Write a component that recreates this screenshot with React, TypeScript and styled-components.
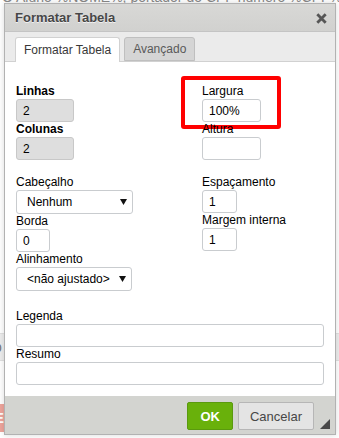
import React from 'react';
import styled, { createGlobalStyle } from 'styled-components';

const GlobalStyle = createGlobalStyle`
  html, body {
    margin: 0;
    padding: 0;
    width: 339px;
    height: 438px;
    overflow: hidden;
    background: #fff;
    font-family: "Liberation Sans", Arial, sans-serif;
  }
`;

// page behind the dialog
const Page = styled.div`
  position: relative;
  width: 339px;
  height: 438px;
  overflow: hidden;
  display: flex;
  flex-direction: column;
`;

const PageText = styled.p`
  margin: -10px 0 0 2px;
  font-size: 14px;
  line-height: 14px;
  color: #8a8a8a;
  white-space: nowrap;
`;

const PageBand = styled.div`
  margin-top: 329px;
  height: 26px;
  background: #ededed;
  border-top: 1px solid #e0e0e0;
  border-bottom: 1px solid #e0e0e0;
  font-size: 14px;
  line-height: 26px;
  color: #777;
  text-indent: -6px;
`;

const PageBottom = styled.div`
  margin-top: 41px;
  display: flex;
  align-items: flex-end;
  gap: 10px;
  height: 30px;
`;

const PinkButton = styled.div`
  width: 52px;
  height: 28px;
  background: #eea59c;
  color: #fff;
  font-size: 15px;
  font-weight: bold;
  line-height: 28px;
  text-indent: -6px;
`;

const GreyBar = styled.div`
  width: 83px;
  height: 3px;
  background: #a3a3a3;
`;

// dialog
const Dialog = styled.div`
  position: absolute;
  left: 4px;
  top: 3px;
  width: 332px;
  height: 432px;
  box-sizing: border-box;
  border: 1px solid #b2b2b2;
  box-shadow: 0 0 6px rgba(0, 0, 0, 0.15);
  display: flex;
  flex-direction: column;
  background: #fff;
`;

const TitleBar = styled.div`
  height: 27px;
  background: linear-gradient(#d8d8d6, #d1d1cf);
  border-bottom: 1px solid #c4c4c4;
  display: flex;
  align-items: center;
  justify-content: space-between;
  padding: 0 8px 0 10px;
`;

const Title = styled.span`
  font-size: 13px;
  font-weight: bold;
  color: #474747;
  text-shadow: 0 1px 0 rgba(255, 255, 255, 0.7);
`;

const CloseIcon = styled.svg`
  width: 11px;
  height: 11px;
  margin-top: 1px;
`;

const TabBar = styled.div`
  height: 30px;
  box-sizing: border-box;
  background: #ebebeb;
  padding: 5px 0 0 10px;
  display: flex;
  align-items: flex-end;
  gap: 4px;
  border-bottom: 1px solid #d1d1d1;
`;

const Tab = styled.div<{ $active?: boolean }>`
  height: ${(p) => (p.$active ? '25px' : '24px')};
  margin-bottom: ${(p) => (p.$active ? '-1px' : '0')};
  box-sizing: border-box;
  padding: 0 8px;
  display: flex;
  align-items: center;
  font-size: 12px;
  color: ${(p) => (p.$active ? '#383838' : '#595959')};
  background: ${(p) => (p.$active ? '#fff' : '#d5d5d5')};
  border: 1px solid ${(p) => (p.$active ? '#d1d1d1' : '#bfbfbf')};
  border-bottom: ${(p) => (p.$active ? 'none' : '1px solid #bfbfbf')};
  border-radius: 3px 3px 0 0;
`;

const Body = styled.div`
  flex: 1;
  padding: 22px 11px 0 11px;
`;

const Columns = styled.div`
  display: grid;
  grid-template-columns: 186px 1fr;
  row-gap: 15px;
  align-items: start;
`;

const Stack = styled.div`
  display: flex;
  flex-direction: column;
`;

const Field = styled.div`
  position: relative;
  display: flex;
  flex-direction: column;
  align-items: flex-start;
`;

const Label = styled.label<{ $bold?: boolean }>`
  font-size: 12px;
  line-height: 15px;
  height: 15px;
  color: #000;
  font-weight: ${(p) => (p.$bold ? 'bold' : 'normal')};
`;

const TextInput = styled.input<{ $w: number; $disabled?: boolean }>`
  width: ${(p) => p.$w}px;
  height: 23px;
  box-sizing: border-box;
  border: 1px solid ${(p) => (p.$disabled ? '#c8c8c8' : '#c9cccf')};
  border-radius: 3px;
  background: ${(p) => (p.$disabled ? '#dedede' : '#fff')};
  padding: 0 6px;
  margin: 0;
  font-family: "Liberation Sans", Arial, sans-serif;
  font-size: 12px;
  color: #000;
  outline: none;
`;

const SelectBox = styled.div<{ $w: number }>`
  width: ${(p) => p.$w}px;
  height: 24px;
  box-sizing: border-box;
  border: 1px solid #c9cccf;
  border-radius: 3px;
  background: #fff;
  display: flex;
  align-items: center;
  justify-content: space-between;
  padding: 0 5px 0 10px;
  font-size: 12px;
  color: #000;
`;

const Arrow = styled.svg`
  width: 7px;
  height: 6px;
`;

const Highlight = styled.div`
  position: absolute;
  left: -21px;
  top: -8px;
  width: 100px;
  height: 53px;
  box-sizing: border-box;
  border: 4px solid #ff0000;
  border-radius: 3px;
  pointer-events: none;
`;

const WideFields = styled.div`
  margin-top: 18px;
  display: flex;
  flex-direction: column;
`;

const Footer = styled.div`
  position: relative;
  height: 38px;
  box-sizing: border-box;
  background: #d3d4d0;
  display: flex;
  justify-content: flex-end;
  align-items: flex-start;
  gap: 5px;
  padding: 6px 21px 0 0;
`;

const Button = styled.button<{ $primary?: boolean }>`
  height: 28px;
  box-sizing: border-box;
  margin: 0;
  padding: 0 ${(p) => (p.$primary ? '12px' : '11px')};
  border-radius: 2px;
  border: 1px solid ${(p) => (p.$primary ? '#5a9a0e' : '#b6b6b6')};
  background: ${(p) => (p.$primary ? '#69b10b' : '#e4e4e4')};
  color: ${(p) => (p.$primary ? '#fff' : '#474747')};
  font-family: "Liberation Sans", Arial, sans-serif;
  font-size: 13px;
  font-weight: ${(p) => (p.$primary ? 'bold' : 'normal')};
`;

const Grip = styled.svg`
  position: absolute;
  right: 5px;
  bottom: 5px;
  width: 10px;
  height: 10px;
`;

function Select({ width, value }: { width: number; value: string }) {
  return (
    <SelectBox $w={width}>
      <span>{value}</span>
      <Arrow viewBox="0 0 7 6">
        <path d="M0 0 L7 0 L3.5 6 Z" fill="#111" />
      </Arrow>
    </SelectBox>
  );
}

export default function App() {
  return (
    <>
      <GlobalStyle />
      <Page>
        <PageText>O Aluno %NOME%, portador do CPF número %CPF%, RG %RG%, aluno</PageText>
        <PageBand>b</PageBand>
        <PageBottom>
          <PinkButton>E</PinkButton>
          <GreyBar />
        </PageBottom>

        <Dialog>
          <TitleBar>
            <Title>Formatar Tabela</Title>
            <CloseIcon viewBox="0 0 11 11">
              <path d="M1.3 1.3 L9.7 9.7 M9.7 1.3 L1.3 9.7" stroke="#565656" strokeWidth="2.8" />
            </CloseIcon>
          </TitleBar>
          <TabBar>
            <Tab $active>Formatar Tabela</Tab>
            <Tab>Avançado</Tab>
          </TabBar>

          <Body>
            <Columns>
              <Stack>
                <Field>
                  <Label $bold>Linhas</Label>
                  <TextInput $w={58} $disabled readOnly value="2" />
                </Field>
                <Field>
                  <Label $bold>Colunas</Label>
                  <TextInput $w={58} $disabled readOnly value="2" />
                </Field>
              </Stack>
              <Stack>
                <Field>
                  <Label>Largura</Label>
                  <TextInput $w={59} readOnly value="100%" />
                  <Highlight />
                </Field>
                <Field>
                  <Label>Altura</Label>
                  <TextInput $w={59} readOnly value="" />
                </Field>
              </Stack>

              <Stack>
                <Field>
                  <Label>Cabeçalho</Label>
                  <Select width={117} value="Nenhum" />
                </Field>
                <Field>
                  <Label>Borda</Label>
                  <TextInput $w={34} readOnly value="0" />
                </Field>
                <Field>
                  <Label>Alinhamento</Label>
                  <Select width={116} value="<não ajustado>" />
                </Field>
              </Stack>
              <Stack>
                <Field>
                  <Label>Espaçamento</Label>
                  <TextInput $w={35} readOnly value="1" />
                </Field>
                <Field>
                  <Label>Margem interna</Label>
                  <TextInput $w={35} readOnly value="1" />
                </Field>
              </Stack>
            </Columns>

            <WideFields>
              <Field>
                <Label>Legenda</Label>
                <TextInput $w={308} readOnly value="" />
              </Field>
              <Field>
                <Label>Resumo</Label>
                <TextInput $w={308} readOnly value="" />
              </Field>
            </WideFields>
          </Body>

          <Footer>
            <Button $primary>OK</Button>
            <Button>Cancelar</Button>
            <Grip viewBox="0 0 10 10">
              <path d="M10 0 L10 10 L0 10 Z" fill="#4a4a4a" />
            </Grip>
          </Footer>
        </Dialog>
      </Page>
    </>
  );
}
